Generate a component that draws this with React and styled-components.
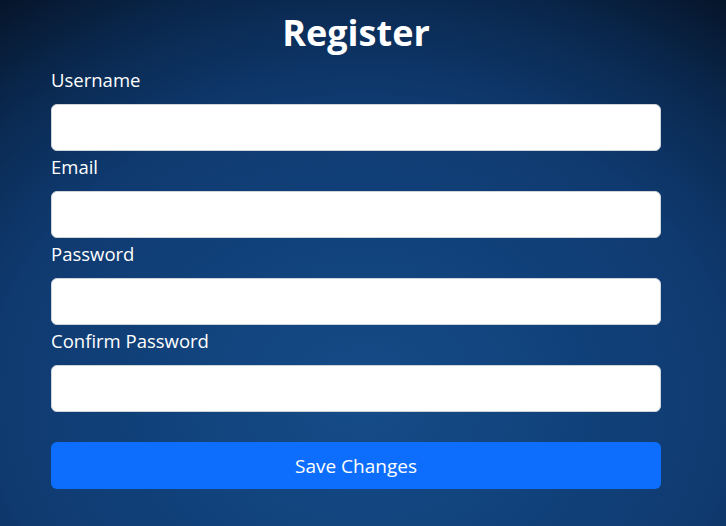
import React from "react";
import styled, { createGlobalStyle } from "styled-components";

const Global = createGlobalStyle`
  html, body { margin: 0; padding: 0; height: 100%; }
  body {
    font-family: "Open Sans", "Noto Sans", sans-serif;
    background: radial-gradient(ellipse 85% 95% at 50% 76%, #154c88 0%, #11417a 35%, #0f3a70 60%, #0a2a52 80%, #061428 100%);
    background-attachment: fixed;
    color: #fff;
    overflow: hidden;
  }
  #root { height: 100%; }
`;

const Page = styled.div`
  width: 726px;
  height: 526px;
  box-sizing: border-box;
  padding: 7px 65px 0 51px;
`;

const Title = styled.h1`
  margin: 0 0 5px;
  font-size: 36px;
  font-weight: 700;
  line-height: 52px;
  text-align: center;
`;

const Form = styled.form`
  display: flex;
  flex-direction: column;
`;

const Field = styled.div`
  display: flex;
  flex-direction: column;
`;

const Label = styled.label`
  font-size: 18.5px;
  line-height: 28px;
  margin: 2px 0 10px;
`;

const Input = styled.input`
  box-sizing: border-box;
  height: 47px;
  width: 100%;
  border: 1px solid #ced4da;
  border-radius: 6px;
  background: #fff;
  padding: 6px 12px;
  font-size: 16px;
  outline: none;
`;

const Button = styled.button`
  margin-top: 30px;
  height: 47px;
  width: 100%;
  border: none;
  border-radius: 6px;
  background: #0d6efd;
  color: #fff;
  font-family: inherit;
  font-size: 19px;
  cursor: pointer;
`;

const fields = ["Username", "Email", "Password", "Confirm Password"];

export default function App() {
  return (
    <>
      <Global />
      <Page>
        <Title>Register</Title>
        <Form onSubmit={(e) => e.preventDefault()}>
          {fields.map((f) => (
            <Field key={f}>
              <Label>{f}</Label>
              <Input type={f.includes("Password") ? "password" : f === "Email" ? "email" : "text"} />
            </Field>
          ))}
          <Button type="submit">Save Changes</Button>
        </Form>
      </Page>
    </>
  );
}
